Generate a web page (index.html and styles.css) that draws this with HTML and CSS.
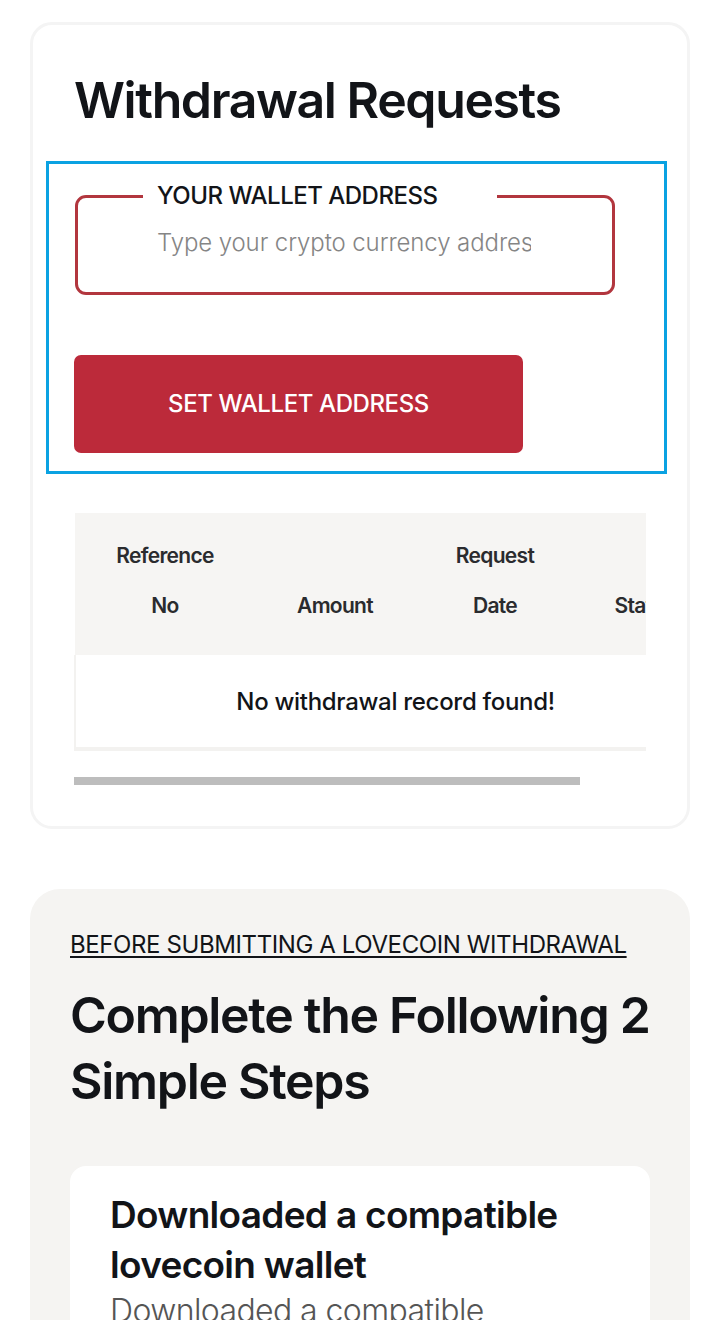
FILE: index.html
```html
<!DOCTYPE html>
<html lang="en">
<head>
<meta charset="utf-8">
<title>Withdrawal Requests</title>
<link rel="stylesheet" href="styles.css">
</head>
<body>
<main class="page">
  <section class="card">
    <h1 class="card-title">Withdrawal Requests</h1>
    <form class="wallet-form">
      <fieldset class="wallet-field">
        <legend class="wallet-legend">YOUR WALLET ADDRESS</legend>
        <input class="wallet-input" type="text" placeholder="Type your crypto currency address">
      </fieldset>
      <button class="wallet-btn" type="button">SET WALLET ADDRESS</button>
    </form>
    <div class="table-wrap">
      <table class="req-table">
        <thead>
          <tr>
            <th class="c1">Reference<br>No</th>
            <th class="c2">Amount</th>
            <th class="c3">Request<br>Date</th>
            <th class="c4">Status</th>
          </tr>
        </thead>
        <tbody>
          <tr><td colspan="4" class="empty">No withdrawal record found!</td></tr>
        </tbody>
      </table>
    </div>
    <div class="scrollbar"><div class="thumb"></div></div>
  </section>

  <section class="steps">
    <p class="kicker">BEFORE SUBMITTING A LOVECOIN WITHDRAWAL</p>
    <h2 class="steps-title">Complete the Following 2 Simple Steps</h2>
    <div class="step-card">
      <h3 class="step-title">Downloaded a compatible lovecoin wallet</h3>
      <p class="step-text">Downloaded a compatible lovecoin wallet</p>
    </div>
  </section>
</main>
</body>
</html>
```

FILE: styles.css
```css
* { box-sizing: border-box; }
html, body { margin: 0; padding: 0; background: #fff; }
body {
  font-family: Inter, "Noto Sans", "Liberation Sans", sans-serif;
  color: #121418;
  overflow: hidden;
}
.page {
  padding: 22px 30px 0 30px;
}
.card {
  border: 3px solid #f4f4f4;
  border-radius: 22px;
  padding: 45px 41px 41px 41px;
}
.card-title {
  margin: 0 0 31px 0;
  font-size: 50px;
  line-height: 60px;
  font-weight: 600;
  letter-spacing: -1.4px;
}
.wallet-form {
  margin: 0 -21px 0 -28px;
  border: 3px solid #0aa2e2;
  padding: 18px 49px 18px 25px;
}
.wallet-field {
  margin: 0 0 0 1px;
  padding: 0;
  border: 3px solid #b2363e;
  border-radius: 11px;
  height: 113px;
}
.wallet-legend {
  margin-left: 65px;
  padding: 0 14px;
  width: 354px;
  font-size: 24px;
  line-height: 28px;
  font-weight: 500;
  letter-spacing: -0.5px;
  color: #121418;
}
.wallet-input {
  display: block;
  margin: 18px 0 0 79px;
  width: 374px;
  border: 0;
  padding: 0;
  font: 300 24px/30px Inter, "Noto Sans", sans-serif;
  letter-spacing: -0.1px;
  color: #121418;
  background: transparent;
  outline: none;
}
.wallet-input::placeholder { color: #858585; }
.wallet-btn {
  display: block;
  margin-top: 60px;
  width: 449px;
  height: 98px;
  border: 0;
  border-radius: 7px;
  background: #bc2a3a;
  color: #fff;
  font: 500 24px/1 Inter, "Noto Sans", sans-serif;
  letter-spacing: -0.4px;
}
.table-wrap {
  margin-top: 39px;
  overflow: hidden;
}
.req-table {
  width: 640px;
  border-collapse: collapse;
  table-layout: fixed;
}
.req-table th {
  background: #f6f5f3;
  font-size: 21px;
  line-height: 50px;
  font-weight: 600;
  letter-spacing: -0.7px;
  color: #2a2b2e;
  padding: 18px 0 24px;
  text-align: center;
  vertical-align: bottom;
}
.c1 { width: 180px; }
.c2 { width: 160px; }
.c3 { width: 160px; }
.c4 { width: 140px; }
.empty {
  border-left: 2px solid #f3f2f0;
  border-bottom: 4px solid #f3f2f0;
  height: 94px;
  padding: 0;
  text-align: center;
  font-size: 24px;
  font-weight: 500;
  letter-spacing: -0.3px;
  color: #121418;
}
.scrollbar {
  margin-top: 26px;
  height: 8px;
}
.thumb {
  width: 506px;
  height: 8px;
  background: #bdbdbd;
}
.steps {
  margin-top: 60px;
  background: #f5f4f2;
  border-radius: 30px;
  padding: 42px 40px 40px;
}
.kicker {
  margin: 0;
  font-size: 24px;
  line-height: 28px;
  font-weight: 400;
  letter-spacing: -0.4px;
  text-decoration: underline;
  text-decoration-thickness: 2px;
  text-underline-offset: 3px;
  color: #121418;
}
.steps-title {
  margin: 23px -12px 52px 0;
  font-size: 50px;
  line-height: 66px;
  font-weight: 600;
  letter-spacing: -1.3px;
}
.step-card {
  background: #fff;
  border-radius: 16px;
  padding: 24px 40px 40px;
}
.step-title {
  margin: 0;
  font-size: 37px;
  line-height: 50px;
  font-weight: 600;
  letter-spacing: -0.7px;
}
.step-text {
  margin: 0;
  font-size: 32px;
  line-height: 42px;
  font-weight: 300;
  letter-spacing: -0.6px;
  color: #555;
}
```
